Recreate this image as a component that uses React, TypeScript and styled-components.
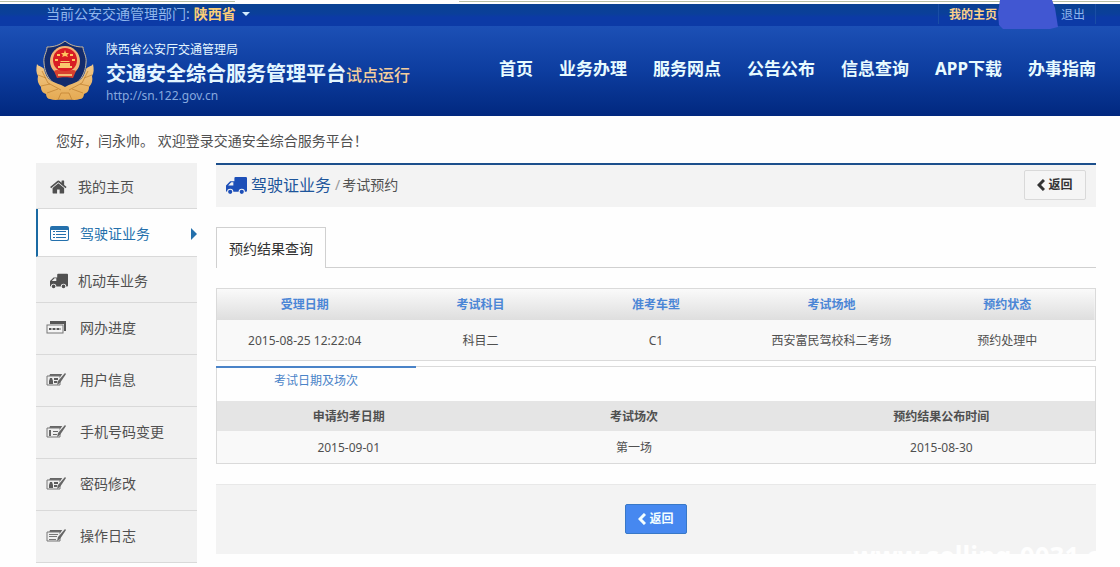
import React from "react";
import styled, { createGlobalStyle, css } from "styled-components";

const GlobalStyle = createGlobalStyle`
  * { box-sizing: border-box; }
  body {
    margin: 0;
    background: #fefefe;
    color: #505050;
    font: 12px/20px "Noto Sans", "Noto Sans CJK SC", sans-serif;
  }
  a { color: inherit; text-decoration: none; }
  button, select { font: inherit; }
`;

/* ---------- header ---------- */

const BrowserEdge = styled.div`
  display: flex;
  justify-content: space-between;
  height: 4px;
`;

const EdgeTab = styled.span<{ $width: string }>`
  width: ${(p) => p.$width};
  height: 2px;
  border-bottom: 1px solid #b9bfa6;
`;

const TopBar = styled.div`
  display: flex;
  justify-content: space-between;
  align-items: center;
  height: 22px;
  padding: 0 24px 2px 46px;
  background: linear-gradient(#0a4192, #0a3f9a 45%, #0c3aa6 60%);
  color: #8fb5ec;
  font-size: 14px;
`;

const Department = styled.label`
  display: flex;
  align-items: center;
  gap: 4px;
`;

const ProvinceSelect = styled.select`
  appearance: none;
  padding: 0;
  border: 0;
  background: transparent;
  color: #fbce78;
  font-weight: bold;
`;

const Caret = styled.span`
  margin-left: 2px;
  border: 4px solid transparent;
  border-top-color: #d4ecff;
  border-bottom: 0;
`;

const Account = styled.div`
  position: relative;
  display: flex;
  justify-content: space-between;
  width: 158px;
  height: 20px;
  padding: 0 10px;
  border: solid #1a4ea5;
  border-width: 0 1px;
  font-size: 12px;
  line-height: 22px;
`;

const HomeLink = styled.a`
  color: #fbd08a;
  font-weight: bold;
`;

const Scribble = styled.svg`
  position: absolute;
  top: -4px;
  left: 58px;
`;

const Banner = styled.header`
  display: flex;
  justify-content: space-between;
  align-items: center;
  height: 90px;
  padding: 0 24px 0 36px;
  background: linear-gradient(#1c50b6, #0d3d9f 50%, #01287f);
`;

const Brand = styled.div`
  display: flex;
  gap: 12px;
`;

const BrandText = styled.div`
  display: flex;
  flex-direction: column;
  color: #e4f6ff;
`;

const Office = styled.span`
  line-height: 20px;
`;

const Title = styled.h1`
  margin: 0;
  font-size: 20px;
  line-height: 27px;
  white-space: nowrap;
`;

const Trial = styled.span`
  color: #f4cd9c;
  font-size: 16px;
  font-weight: 500;
`;

const SiteUrl = styled.a`
  color: #86a9df;
  line-height: 13px;
`;

const MainNav = styled.nav`
  display: flex;
  gap: 26px;
  padding-bottom: 4px;
  color: #e8fbff;
  font-size: 17px;
  font-weight: bold;
  white-space: nowrap;
`;

/* ---------- page body ---------- */

const Page = styled.div`
  padding: 0 24px 0 36px;
`;

const Welcome = styled.p`
  margin: 0;
  padding: 15px 20px 12px;
  font-size: 14px;
  white-space: pre-wrap;
`;

const Columns = styled.div`
  display: flex;
  align-items: flex-start;
  gap: 19px;
`;

const Sidebar = styled.nav`
  flex: none;
  width: 161px;
`;

const SideLink = styled.a<{ $active?: boolean; $tall?: boolean }>`
  display: flex;
  align-items: center;
  height: ${(p) => (p.$tall ? 52 : 46)}px;
  padding: ${(p) => (p.$tall ? "0 0 2px 10px" : "2px 0 0 14px")};
  border-bottom: 1px solid #d9d9d9;
  background: #f1f1f1;
  font-size: 14px;
  ${(p) =>
    p.$active &&
    css`
      height: 48px;
      padding-left: 12px;
      border-left: 2px solid #1a6aa3;
      background: #fefefe;
      color: #2470ac;
    `}
`;

const IconSlot = styled.span<{ $width: number }>`
  display: flex;
  width: ${(p) => p.$width}px;
`;

const ActiveArrow = styled.span`
  margin-left: auto;
  border: 6px solid transparent;
  border-left-color: #2470ac;
  border-right: 0;
`;

const Content = styled.main`
  flex: 1;
  min-width: 0;
`;

const Crumbs = styled.div`
  display: flex;
  align-items: center;
  height: 44px;
  padding: 0 10px 2px;
  border-top: 2px solid #1c4f8c;
  background: #f3f3f3;
  font-size: 14px;
`;

const CrumbIcon = styled.span`
  display: flex;
  color: #1d4fb8;
`;

const Section = styled.a`
  margin: 0 4px;
  color: #1d559b;
  font-size: 16px;
`;

const Slash = styled.span`
  margin-right: 2px;
  color: #999;
`;

const BackButton = styled.button<{ $primary?: boolean }>`
  display: flex;
  align-items: center;
  justify-content: center;
  gap: 3px;
  width: 62px;
  height: 30px;
  padding: 0;
  border: 1px solid ${(p) => (p.$primary ? "#3878c7" : "#d9d9d9")};
  border-radius: 2px;
  background: ${(p) => (p.$primary ? "#4688f0" : "#f5f5f5")};
  color: ${(p) => (p.$primary ? "#f4ffff" : "#333")};
  font-size: 12px;
  font-weight: bold;
`;

const PushRight = styled.div`
  margin-left: auto;
`;

const Tabs = styled.div`
  display: flex;
  margin: 20px 0;
  border-bottom: 1px solid #d0d0d0;
`;

const Tab = styled.button`
  height: 41px;
  margin-bottom: -1px;
  padding: 2px 12px 0;
  border: 1px solid #d0d0d0;
  border-bottom: 0;
  background: #fefefe;
  color: #333;
  font-size: 14px;
`;

const Table = styled.table`
  width: 100%;
  table-layout: fixed;
  border-spacing: 0;
  border: 1px solid #dadada;
  background: #f9f9f9;
  text-align: center;

  th { padding: 0; }
  td { padding: 2px 0 0; }
`;

const ResultTable = styled(Table)`
  margin-bottom: 5px;

  th {
    height: 31px;
    color: #4b86d6;
  }
  thead { background: linear-gradient(#fafafa, #dedede); }
  td { height: 40px; }
`;

const SessionTable = styled(Table)`
  border-top: 0;

  th { height: 30px; padding-top: 2px; background: #e5e5e5; }
  td { height: 32px; }
`;

const SessionHead = styled.div`
  height: 35px;
  border: solid #dadada;
  border-width: 1px 1px 0;
`;

const SessionTitle = styled.h2`
  width: 200px;
  margin: -1px 0 0 -1px;
  padding-top: 2px;
  border-top: 2px solid #4a83c8;
  color: #4a83c8;
  font-size: 12px;
  font-weight: normal;
  line-height: 22px;
  text-align: center;
`;

const ActionBar = styled.div`
  position: relative;
  display: flex;
  justify-content: center;
  align-items: center;
  height: 70px;
  margin-top: 20px;
  padding-bottom: 2px;
  border-top: 1px solid #e8e8e8;
  background: #f3f3f3;
`;

const Watermark = styled.span`
  position: absolute;
  right: -4px;
  bottom: -12px;
  color: #fefefe;
  font-size: 26px;
  font-weight: bold;
`;

/* ---------- drawings ---------- */

const Emblem = () => (
  <svg width="58" height="62" viewBox="0 0 58 62" aria-hidden="true">
    <defs>
      <linearGradient id="gold" x1="0" y1="0" x2="0" y2="1">
        <stop offset="0" stopColor="#f3c98a" />
        <stop offset="1" stopColor="#e5aa52" />
      </linearGradient>
    </defs>
    <path
      d="M29 1c5 4 11 6 18 6 0 5 4 9 3 16-1 12-6 20-21 28C14 43 9 35 8 23c-1-7 3-11 3-16 7 0 13-2 18-6z"
      fill="#132b6c"
      stroke="#c9b79a"
      strokeWidth="1"
    />
    <circle cx="29" cy="21" r="15" fill="#f3b374" />
    <circle cx="29" cy="20" r="12" fill="#d81d24" />
    <path
      d="M29 10l1 3h3l-2 2 1 2-3-1-3 1 1-2-2-2h3zM21 14h3v2h-3zM34 14h3v2h-3zM19 19h3v2h-3zM36 19h3v2h-3z"
      fill="#ffc65e"
    />
    <path d="M22 26h2v-3h10v3h2v2H22zM25 21h8l1 1H24z" fill="#f9c86d" />
    <path d="M18 31c3-2 6 0 11 0s8-2 11 0l-3 7c-4-1-12-1-16 0z" fill="#d8402e" />
    <path d="M22 35h14" stroke="#f3bb72" strokeWidth="2" />
    <path
      d="M1 24c2 3 5 2 7 5 1 5 3 9 7 12 4 2 9 3 14 6 5-3 10-4 14-6 4-3 6-7 7-12 2-3 5-2 7-5 1 5 1 9-1 12 1 4 0 8-3 11 0 4-2 6-5 7 0 3-2 5-4 5-5 2-10 0-15 1-5-1-10 1-15-1-2 0-4-2-4-5-3-1-5-3-5-7-3-3-4-7-3-11-2-3-2-7-1-12z"
      fill="url(#gold)"
    />
    <path
      d="M2 35l8 3M5 46l9-2M11 53l11-4M56 35l-8 3M53 46l-9-2M47 53l-11-4M6 31l6 12 13 7M52 31l-6 12-13 7M22 60l3-7h8l3 7"
      fill="none"
      stroke="#bd7d2d"
      strokeWidth="1"
      opacity="0.7"
    />
  </svg>
);

const HomeIcon = () => (
  <svg width="18" height="18" viewBox="0 0 1792 1792" fill="currentColor" aria-hidden="true">
    <path d="M1408 992v480q0 26-19 45t-45 19h-384v-384h-256v384h-384q-26 0-45-19t-19-45v-480q0-1 .5-3t.5-3l575-474 575 474q1 2 1 6zm223-69l-62 74q-8 9-21 11h-3q-13 0-21-7l-692-577-692 577q-12 8-24 7-13-2-21-11l-62-74q-8-10-7-23.5t11-21.5l719-599q32-26 76-26t76 26l244 204v-195q0-14 9-23t23-9h192q14 0 23 9t9 23v408l219 182q10 8 11 21.5t-7 23.5z" />
  </svg>
);

const ListIcon = () => (
  <svg width="19" height="15" viewBox="0 0 19 15" aria-hidden="true">
    <path
      fill="currentColor"
      fillRule="evenodd"
      d="M2 0h15a2 2 0 0 1 2 2v11a2 2 0 0 1-2 2H2a2 2 0 0 1-2-2V2a2 2 0 0 1 2-2zM1 4v9l1 1h15l1-1V4zM3 5h2v1H3zm3 0h10v1H6zM3 8h2v1H3zm3 0h10v1H6zm-3 3h2v1H3zm3 0h10v1H6z"
    />
  </svg>
);

const TruckIcon = ({ size = 18 }: { size?: number }) => (
  <svg width={size} height={size} viewBox="0 0 20 20" fill="currentColor" aria-hidden="true">
    <path
      fillRule="evenodd"
      d="M9 2h10a1 1 0 0 1 1 1v12a1 1 0 0 1-1 1h-1a3 3 0 0 0-6 0H7a3 3 0 0 0-6 0 1 1 0 0 1-1-1v-5l4-4h4V3a1 1 0 0 1 1-1zM5 7l-3 3h5V7z"
    />
    <circle cx="4" cy="16" r="2" />
    <circle cx="15" cy="16" r="2" />
  </svg>
);

const ChevronIcon = () => (
  <svg width="8" height="12" viewBox="0 0 8 12" aria-hidden="true">
    <path d="M7 1L2 6l5 5" fill="none" stroke="currentColor" strokeWidth="3" />
  </svg>
);

const ProgressIcon = () => (
  <svg width="20" height="13" viewBox="0 0 20 13" aria-hidden="true">
    <path d="M4 0h16v10h-2V3H4z" fill="#555" />
    <rect x="1" y="4" width="16" height="8" fill="#f4f4f4" stroke="#777" />
    <path d="M3 8h12" stroke="#666" />
    <path d="M3 7h2v2H3zm4 0h2v2H7zm4 0h2v2h-2z" fill="#555" />
  </svg>
);

const CardIcon = ({ kind }: { kind: "user" | "phone" | "log" }) => (
  <svg width="20" height="13" viewBox="0 0 20 13" aria-hidden="true">
    <path d="M4 1h14l-2 3H3z" fill="#666" />
    <path d="M1 3h13v9H1z" fill="#efefef" stroke="#777" />
    {kind === "user" && <path d="M3 11V8l1-3h2l1 3v3zM8 5h4v2H8zM8 8h4v2H8z" fill="#5c5c5c" />}
    {kind === "phone" && <path d="M3 5h2v6H3zM7 6h5v1H7zM7 9h4v1H7z" fill="#666" />}
    {kind === "log" && <path d="M3 5h9v1H3zM3 7h8v1H3zM3 10h7v1H3z" fill="#777" />}
    <path d="M18 1L12 10" stroke="#efefef" strokeWidth="3" />
    <path d="M19 0l1 1-6 9-3 2 1-4z" fill="#666" />
  </svg>
);

/* ---------- data ---------- */

const navItems = ["首页", "业务办理", "服务网点", "公告公布", "信息查询", "APP下载", "办事指南"];

const sideItems = [
  { text: "我的主页", icon: <HomeIcon /> },
  { text: "驾驶证业务", icon: <ListIcon />, active: true },
  { text: "机动车业务", icon: <TruckIcon /> },
  { text: "网办进度", icon: <ProgressIcon />, tall: true },
  { text: "用户信息", icon: <CardIcon kind="user" />, tall: true },
  { text: "手机号码变更", icon: <CardIcon kind="phone" />, tall: true },
  { text: "密码修改", icon: <CardIcon kind="user" />, tall: true },
  { text: "操作日志", icon: <CardIcon kind="log" />, tall: true },
];

const resultHead = ["受理日期", "考试科目", "准考车型", "考试场地", "预约状态"];
const resultRow = ["2015-08-25 12:22:04", "科目二", "C1", "西安富民驾校科二考场", "预约处理中"];
const sessionHead = ["申请约考日期", "考试场次", "预约结果公布时间"];
const sessionRow = ["2015-09-01", "第一场", "2015-08-30"];

const headCells = (cells: string[]) => (
  <thead>
    <tr>{cells.map((c) => <th key={c} scope="col">{c}</th>)}</tr>
  </thead>
);

const bodyCells = (cells: string[]) => (
  <tbody>
    <tr>{cells.map((c) => <td key={c}>{c}</td>)}</tr>
  </tbody>
);

export default function App() {
  return (
    <>
      <GlobalStyle />
      <BrowserEdge>
        <EdgeTab $width="21%" />
        <EdgeTab $width="59%" />
      </BrowserEdge>
      <TopBar>
        <Department>
          当前公安交通管理部门:
          <ProvinceSelect defaultValue="sn">
            <option value="sn">陕西省</option>
          </ProvinceSelect>
          <Caret />
        </Department>
        <Account>
          <HomeLink href="#home">我的主页</HomeLink>
          <a href="#logout">退出</a>
          <Scribble width="62" height="30" viewBox="0 0 62 30" aria-hidden="true">
            <path d="M3 0h52l3 8 3 19-8 2H6l-4-4-1-12z" fill="#4157d2" />
          </Scribble>
        </Account>
      </TopBar>
      <Banner>
        <Brand>
          <Emblem />
          <BrandText>
            <Office>陕西省公安厅交通管理局</Office>
            <Title>
              交通安全综合服务管理平台<Trial>试点运行</Trial>
            </Title>
            <SiteUrl href="http://sn.122.gov.cn">http://sn.122.gov.cn</SiteUrl>
          </BrandText>
        </Brand>
        <MainNav>
          {navItems.map((t) => (
            <a key={t} href="#nav">{t}</a>
          ))}
        </MainNav>
      </Banner>

      <Page>
        <Welcome>您好，闫永帅。 欢迎登录交通安全综合服务平台！</Welcome>
        <Columns>
          <Sidebar>
            {sideItems.map((item) => (
              <SideLink key={item.text} href="#side" $active={item.active} $tall={item.tall}>
                <IconSlot $width={item.tall ? 34 : item.active ? 30 : 28}>{item.icon}</IconSlot>
                {item.text}
                {item.active && <ActiveArrow />}
              </SideLink>
            ))}
          </Sidebar>

          <Content>
            <Crumbs>
              <CrumbIcon>
                <TruckIcon size={21} />
              </CrumbIcon>
              <Section href="#license">驾驶证业务</Section>
              <Slash>/</Slash>
              考试预约
              <PushRight>
                <BackButton type="button">
                  <ChevronIcon />
                  返回
                </BackButton>
              </PushRight>
            </Crumbs>
            <Tabs>
              <Tab type="button">预约结果查询</Tab>
            </Tabs>
            <ResultTable>
              {headCells(resultHead)}
              {bodyCells(resultRow)}
            </ResultTable>
            <SessionHead>
              <SessionTitle>考试日期及场次</SessionTitle>
            </SessionHead>
            <SessionTable>
              <colgroup>
                <col width="30%" />
                <col width="35%" />
                <col width="35%" />
              </colgroup>
              {headCells(sessionHead)}
              {bodyCells(sessionRow)}
            </SessionTable>
            <ActionBar>
              <BackButton type="button" $primary>
                <ChevronIcon />
                返回
              </BackButton>
              <Watermark>www.selling-0031.c</Watermark>
            </ActionBar>
          </Content>
        </Columns>
      </Page>
    </>
  );
}
